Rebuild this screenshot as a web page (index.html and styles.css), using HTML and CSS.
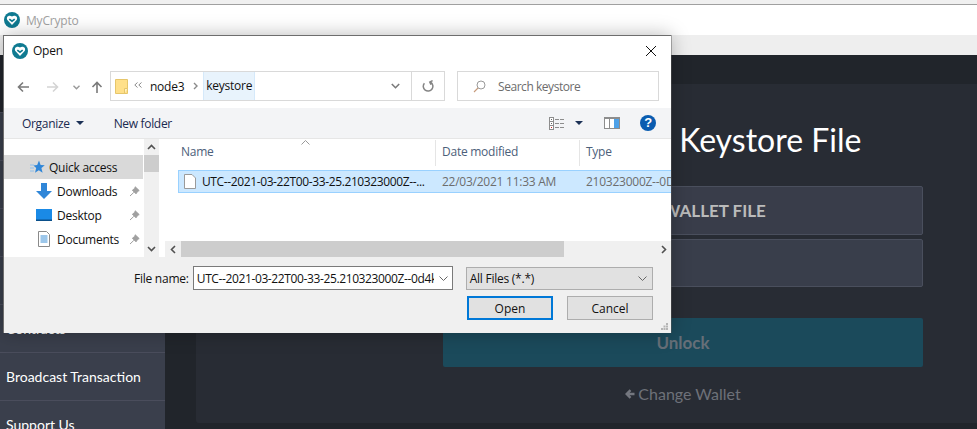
FILE: index.html
```html
<!DOCTYPE html>
<html lang="en">
<head>
<meta charset="utf-8">
<title>MyCrypto</title>
<link rel="stylesheet" href="styles.css">
</head>
<body>
<svg class="defs" width="0" height="0" aria-hidden="true">
  <defs>
    <symbol id="logo" viewBox="0 0 16 16">
      <circle cx="8" cy="8" r="8" fill="#0f7a91"/>
      <path d="M8 4.6 C6.8 3.2 3.9 3.3 3.1 5.2 C2.6 6.4 3 7.5 3.6 8.3 L8 13 L12.4 8.3 C13 7.5 13.4 6.4 12.9 5.2 C12.1 3.3 9.2 3.2 8 4.6Z" fill="#fff"/>
      <path d="M5.3 7.1 L8 9.2 L10.7 7.1" fill="none" stroke="#0f7a91" stroke-width="1.7"/>
    </symbol>
    <symbol id="pin" viewBox="0 0 11 11">
      <path d="M6.2 0.8 L10.2 4.6 L8.8 5.2 L7 7.8 L3.4 4.2 L5.8 2.4Z M4.8 6.4 L1 10" fill="#a0a0a0" stroke="#a0a0a0"/>
    </symbol>
  </defs>
</svg>

<div class="app">
  <div class="top-strip"></div>
  <header class="titlebar">
    <svg class="title-logo"><use href="#logo"/></svg>
    <span class="app-name">MyCrypto</span>
  </header>
  <div class="menubar"></div>

  <div class="workspace">
    <nav class="sidebar">
      <a class="nav-item">View &amp; Send</a>
      <a class="nav-item">Swap</a>
      <a class="nav-item">Check Tx Status</a>
      <a class="nav-item">Sign &amp; Verify</a>
      <a class="nav-item">Contracts</a>
      <a class="nav-item">Broadcast Transaction</a>
      <a class="nav-item">Support Us</a>
    </nav>
    <main class="card">
      <div class="keystore">
        <h1 class="heading"><span class="heading-lead">Select Your</span> Keystore File</h1>
        <button class="file-btn">SELECT WALLET FILE</button>
        <div class="password-box"></div>
        <button class="unlock">Unlock</button>
        <a class="change-wallet">
          <svg class="back-arrow" viewBox="0 0 10 10"><path d="M9.500 5 H2.500 M5.500 1.200 L1.700 5 L5.500 8.800" stroke="#74777f" stroke-width="2.400" fill="none"/></svg>
          Change Wallet
        </a>
      </div>
    </main>
  </div>
</div>

<section class="dialog">
  <div class="dlg-title">
    <svg class="dlg-logo"><use href="#logo"/></svg>
    <span class="dlg-name">Open</span>
    <svg class="dlg-close" viewBox="0 0 12 12"><path d="M1 1 L11 11 M11 1 L1 11" stroke="#111" stroke-width="1" fill="none"/></svg>
  </div>

  <div class="nav-row">
    <svg class="nav-ic back" viewBox="0 0 12 12"><path d="M12 6 H1.5 M6 1.5 L1.5 6 L6 10.5" stroke="#7a7a7a" stroke-width="1.6" fill="none"/></svg>
    <svg class="nav-ic forward" viewBox="0 0 12 12"><path d="M0 6 H10.5 M6 1.5 L10.5 6 L6 10.5" stroke="#d4d4d4" stroke-width="1.6" fill="none"/></svg>
    <svg class="nav-chev" viewBox="0 0 7 5"><path d="M0.5 0.8 L3.5 3.8 L6.5 0.8" stroke="#999" stroke-width="1.4" fill="none"/></svg>
    <svg class="nav-ic up" viewBox="0 0 12 12"><path d="M6 12 V1.5 M1.5 6 L6 1.5 L10.5 6" stroke="#7a7a7a" stroke-width="1.6" fill="none"/></svg>
    <div class="address">
      <svg class="folder" viewBox="0 0 13 15"><path d="M0.5 0.5 H12.5 V14.5 H0.5Z" fill="#ffe08a" stroke="#e6c66b"/><path d="M9.5 14.5 V9.5 H12.5" fill="#fff1c4" stroke="#e6c66b"/></svg>
      <svg class="crumb-more" viewBox="0 0 8 6"><path d="M3.500 0.500 L0.800 3 L3.500 5.500 M7.500 0.500 L4.800 3 L7.500 5.500" stroke="#8a8a8a" fill="none"/></svg>
      <span class="crumb">node3</span>
      <svg class="crumb-sep" viewBox="0 0 5 8"><path d="M1 1 L4 4 L1 7" stroke="#8a8a8a" stroke-width="1.4" fill="none"/></svg>
      <span class="crumb current">keystore</span>
      <svg class="addr-chev" viewBox="0 0 9 6"><path d="M0.8 1 L4.5 4.7 L8.2 1" stroke="#7a7a7a" stroke-width="1.6" fill="none"/></svg>
      <div class="refresh">
        <svg class="refresh-ic" viewBox="0 0 12 12"><path d="M9.6 3.2 A4.8 4.8 0 1 1 3.4 2.2 M1.4 0.6 L4.2 2 L3 4.6" transform="matrix(-1 0 0 1 12 0)" stroke="#858585" stroke-width="1.5" fill="none"/></svg>
      </div>
    </div>
    <div class="search">
      <svg class="search-ic" viewBox="0 0 13 13"><circle cx="8" cy="5" r="4" fill="none" stroke="#9a9a9a"/><path d="M5 8 L1 12" stroke="#c79a7a" stroke-width="1.1"/></svg>
      <span class="search-text">Search keystore</span>
    </div>
  </div>

  <div class="toolbar">
    <span class="tool">Organize</span>
    <span class="caret"></span>
    <span class="tool new-folder">New folder</span>
    <svg class="view-ic" viewBox="0 0 17 13"><rect x="0.5" y="0.5" width="4" height="12" fill="#fff" stroke="#8d8d8d"/><path d="M0.5 4.5 H4.5 M0.5 8.5 H4.5" stroke="#8d8d8d"/><rect x="2" y="2" width="1" height="1" fill="#666"/><rect x="2" y="6" width="1" height="1" fill="#666"/><rect x="2" y="10" width="1" height="1" fill="#c22"/><path d="M6 2.5 H16 M6 6.5 H16 M6 10.5 H16" stroke="#8d8d8d" stroke-dasharray="4 1"/></svg>
    <span class="caret view-caret"></span>
    <svg class="pane-ic" viewBox="0 0 16 12"><rect x="0.5" y="0.5" width="15" height="11" fill="#fff" stroke="#8d8d8d"/><rect x="1" y="0" width="14" height="2" fill="#8d8d8d"/><rect x="5" y="1" width="1" height="10" fill="#8d8d8d"/><rect x="10" y="2" width="5" height="9" fill="#4ea1e8"/></svg>
    <span class="help">?</span>
  </div>

  <div class="browser">
    <aside class="tree">
      <div class="tree-list">
        <div class="tree-row quick">
          <svg class="tree-ic star" viewBox="0 0 15 14"><path d="M9 0.5 L10.6 5 L14.8 5.2 L11.4 8 L12.6 12.8 L8.8 10.2 L5 12.8 L6.2 8 L3.4 5.5 L7.2 5Z" fill="#2f86d8"/><path d="M0 5 H4 M0 8 H4 M0 11 H4" stroke="#8fc0ec"/></svg>
          <span>Quick access</span>
        </div>
        <div class="tree-row sub">
          <svg class="tree-ic" viewBox="0 0 16 16"><path d="M5 0 H11 V8 H16 L8 16 L0 8 H5Z" fill="#2f86d8"/></svg>
          <span class="tree-label">Downloads</span>
          <svg class="pin"><use href="#pin"/></svg>
        </div>
        <div class="tree-row sub">
          <svg class="tree-ic" viewBox="0 0 16 12"><rect width="16" height="11" fill="#1a8ae6"/><rect y="10.5" width="16" height="1.5" fill="#0a4f8a"/></svg>
          <span class="tree-label">Desktop</span>
          <svg class="pin"><use href="#pin"/></svg>
        </div>
        <div class="tree-row sub">
          <svg class="tree-ic doc" viewBox="0 0 12 16"><path d="M0.5 0.5 H8.5 L11.5 3.5 V15.5 H0.5Z" fill="#fff" stroke="#8a8a8a"/><path d="M2.5 5 H9.5 M2.5 7 H9.5 M2.5 9 H9.5 M2.5 11 H9.5" stroke="#3a8fd6"/></svg>
          <span class="tree-label">Documents</span>
          <svg class="pin"><use href="#pin"/></svg>
        </div>
      </div>
      <div class="vscroll">
        <svg class="arrow" viewBox="0 0 9 6"><path d="M1 5 L4.5 1.5 L8 5" stroke="#505050" stroke-width="1.6" fill="none"/></svg>
        <div class="vthumb"></div>
        <svg class="arrow down" viewBox="0 0 9 6"><path d="M1 1 L4.5 4.5 L8 1" stroke="#505050" stroke-width="1.6" fill="none"/></svg>
      </div>
    </aside>

    <div class="files">
      <div class="columns">
        <div class="col col-name">Name<svg class="sort" viewBox="0 0 9 5"><path d="M0.5 4.5 L4.5 0.5 L8.5 4.5" stroke="#999" fill="none"/></svg></div>
        <div class="col col-date">Date modified</div>
        <div class="col col-type">Type</div>
      </div>
      <div class="file-row">
        <div class="cell cell-name">
          <svg class="file-ic" viewBox="0 0 12 15"><path d="M0.5 0.5 H8 L11.5 4 V14.5 H0.5Z" fill="#fff" stroke="#9a9a9a"/></svg>
          <span class="long-name">UTC--2021-03-22T00-33-25.210323000Z--...</span>
        </div>
        <div class="cell cell-date">22/03/2021 11:33 AM</div>
        <div class="cell cell-type">210323000Z--0D</div>
      </div>
      <div class="hscroll">
        <svg class="harrow" viewBox="0 0 6 9"><path d="M5 1 L1.5 4.5 L5 8" stroke="#505050" stroke-width="1.6" fill="none"/></svg>
        <div class="hthumb"></div>
        <svg class="harrow right" viewBox="0 0 6 9"><path d="M1 1 L4.5 4.5 L1 8" stroke="#505050" stroke-width="1.6" fill="none"/></svg>
      </div>
    </div>
  </div>

  <footer class="dlg-foot">
    <div class="foot-row">
      <label class="file-label">File name:</label>
      <div class="name-box">
        <span class="name-value long-name">UTC--2021-03-22T00-33-25.210323000Z--0d4k</span>
        <svg class="combo-chev" viewBox="0 0 9 5"><path d="M0.5 0.5 L4.5 4.5 L8.5 0.5" stroke="#666" fill="none"/></svg>
      </div>
      <div class="type-box">
        <span>All Files (*.*)</span>
        <svg class="combo-chev" viewBox="0 0 9 5"><path d="M0.5 0.5 L4.5 4.5 L8.5 0.5" stroke="#666" fill="none"/></svg>
      </div>
    </div>
    <div class="foot-actions">
      <button class="dlg-btn primary">Open</button>
      <button class="dlg-btn">Cancel</button>
    </div>
    <svg class="grip" viewBox="0 0 7 7"><path d="M5 0h2v2H5z M2.500 2.500h2v2h-2z M5 2.500h2v2H5z M0 5h2v2H0z M2.500 5h2v2h-2z M5 5h2v2H5z" fill="#b5b5b5"/></svg>
  </footer>
</section>
</body>
</html>
```
FILE: styles.css
```css
* { box-sizing: border-box; }
html, body { margin: 0; height: 100%; }
body { width: 977px; height: 429px; overflow: hidden; background: #21252b; font-family: "Lato", sans-serif; position: relative; }
.defs { position: absolute; }
svg { display: block; flex: none; }

.app { display: flex; flex-direction: column; height: 429px; }
.top-strip { height: 5px; background: #f0f0f0; border-bottom: 1px solid #a0a0a0; }
.titlebar { height: 30px; background: #fff; display: flex; align-items: center; padding-left: 4px; }
.title-logo { width: 16px; height: 16px; }
.app-name { margin-left: 6px; font: 12px "Open Sans", sans-serif; letter-spacing: -.2px; color: #a2a2a2; }
.menubar { height: 20px; background: #eee; }

.workspace { flex: 1; display: flex; min-height: 0; background: #21252b; }
.sidebar { width: 165px; margin-top: 57px; background: #3a3f4c; border-top: 1px solid #4a4d5c; flex: none; }
.nav-item { display: flex; align-items: center; height: 48px; padding-left: 6px; border-bottom: 1px solid #4a4d5c; color: #fff; font-size: 14px; }

.card { flex: 1; margin: 29px 0 6px 31px; background: #282c34; border-radius: 3px 0 0 3px; padding-left: 247px; }
.keystore { width: 480px; display: flex; flex-direction: column; align-items: center; }
.heading { margin: 37px 0 0 4px; height: 65px; font-size: 32px; font-weight: 400; line-height: 38px; color: #fff; white-space: nowrap; }
.heading-lead { margin-right: 6px; }
.file-btn { width: 100%; height: 49px; background: #393d4a; border: 1px solid #4a4f5d; border-radius: 2px; color: #bbb; font: 700 17px "Lato", sans-serif; }
.password-box { width: 100%; height: 48px; margin-top: 4px; background: #393e4b; border: 1px solid #4a4f5d; border-radius: 2px; }
.unlock { width: 100%; height: 49px; margin-top: 31px; background: #1b4a5b; border: 0; border-radius: 2px; color: #666f78; font: 700 17px "Lato", sans-serif; }
.change-wallet { margin-top: 17px; font-size: 16px; line-height: 20px; color: #6e7179; display: flex; align-items: center; gap: 3px; }
.back-arrow { width: 10px; height: 10px; }

.dialog { position: absolute; left: 3px; top: 35px; width: 668px; height: 298px; background: #fff; border: 1px solid #6d6d6d; border-width: 1px 0 0 1px; box-shadow: 1px 0 0 rgba(90,90,90,.45), 0 0 18px rgba(0,0,0,.28); display: flex; flex-direction: column; font: 12px "Open Sans", sans-serif; letter-spacing: -.25px; color: #111; }
.long-name { letter-spacing: -.38px; }
.dlg-title { height: 31px; display: flex; align-items: center; padding: 0 14px 2px 8px; flex: none; }
.dlg-logo { width: 16px; height: 16px; }
.dlg-name { margin-left: 5px; font-size: 12px; }
.dlg-close { width: 12px; height: 12px; margin-left: auto; }

.nav-row { height: 41px; display: flex; align-items: flex-start; padding: 4px 0 0 13px; flex: none; }
.nav-ic { width: 12px; height: 12px; margin-top: 10px; }
.forward { margin-left: 18px; }
.nav-chev { width: 7px; height: 5px; margin: 14px 0 0 14px; }
.up { margin-left: 11px; }
.address { width: 335px; height: 30px; margin-left: 7px; border: 1px solid #d9d9d9; display: flex; align-items: center; padding-left: 4px; }
.folder { width: 13px; height: 15px; }
.crumb-more { width: 8px; height: 6px; margin: -3px 0 0 6px; }
.crumb { font-size: 12px; margin-left: 8px; }
.crumb.current { height: 28px; line-height: 28px; background: #e8f3fc; border: 1px solid #d5e9fa; border-width: 0 1px; margin-left: 5px; padding: 0 2px; }
.crumb-sep { width: 5px; height: 8px; margin-left: 9px; }
.addr-chev { width: 9px; height: 6px; margin-left: auto; margin-right: 11px; }
.refresh { width: 33px; height: 28px; border-left: 1px solid #d9d9d9; display: flex; align-items: center; justify-content: center; }
.refresh-ic { width: 12px; height: 12px; }
.search { width: 202px; height: 30px; margin-left: 12px; border: 1px solid #d9d9d9; display: flex; align-items: center; padding-left: 15px; }
.search-ic { width: 13px; height: 13px; }
.search-text { margin-left: 12px; color: #6d6d6d; font-size: 12px; letter-spacing: -.45px; }

.toolbar { height: 31px; background: #f3f4f6; border-bottom: 1px solid #e6e6e6; display: flex; align-items: center; padding: 0 15px 0 18px; color: #1a2a50; flex: none; }
.tool { font-size: 12px; letter-spacing: -.32px; }
.caret { width: 0; height: 0; border: 4px solid transparent; border-top: 4px solid #1c3156; border-bottom: 0; margin-left: 6px; }
.new-folder { margin-left: 30px; }
.view-ic { width: 17px; height: 13px; margin-left: auto; }
.view-caret { margin-left: 9px; }
.pane-ic { width: 16px; height: 12px; margin-left: 21px; }
.help { width: 16px; height: 16px; margin-left: 20px; border-radius: 50%; background: #0a5cb0; color: #fff; font: 700 13px/16px "Liberation Sans", sans-serif; text-align: center; }

.browser { flex: 1; display: flex; min-height: 0; background: #fff; }
.tree { width: 158px; display: flex; flex: none; }
.tree-list { width: 139px; padding-top: 16px; }
.tree-row { height: 24px; display: flex; align-items: center; }
.quick { background: #d9d9d9; padding-left: 26px; }
.quick span { margin-left: 4px; }
.sub { padding-left: 32px; }
.tree-ic { width: 16px; height: 16px; }
.star { width: 15px; height: 14px; }
.doc { width: 12px; margin: 0 2px; }
.tree-label { margin-left: 5px; }
.pin { width: 11px; height: 11px; margin-left: auto; margin-right: 3px; }
.vscroll { width: 15px; margin-left: 1px; background: #f0f0f0; display: flex; flex-direction: column; align-items: center; }
.arrow { width: 9px; height: 6px; margin-top: 5px; }
.vthumb { width: 15px; height: 17px; background: #cdcdcd; margin-top: 5px; }
.arrow.down { margin-top: auto; margin-bottom: 5px; }

.files { flex: 1; display: flex; flex-direction: column; min-width: 0; overflow: hidden; }
.columns { height: 31px; display: flex; color: #4c607a; flex: none; }
.col { padding: 3px 0 0 6px; height: 26px; margin-top: 1px; border-right: 1px solid #e5e5e5; }
.col-name { width: 274px; padding-left: 19px; position: relative; }
.sort { position: absolute; left: 139px; top: 0; width: 9px; height: 5px; }
.col-date { width: 144px; }
.col-type { border: 0; }
.file-row { height: 23px; margin-left: 16px; display: flex; align-items: center; background: #cce8ff; border: 1px solid #99d1ff; border-right: 0; flex: none; white-space: nowrap; }
.cell-name { width: 263px; display: flex; align-items: center; padding-left: 5px; }
.file-ic { width: 12px; height: 15px; margin-right: 6px; }
.cell-date { width: 144px; color: #6d6d6d; }
.cell-type { color: #6d6d6d; overflow: hidden; width: 85px; }
.hscroll { height: 16px; margin-top: auto; margin-left: 3px; background: #f0f0f0; display: flex; align-items: center; }
.harrow { width: 6px; height: 9px; margin: 0 5px; }
.hthumb { width: 383px; height: 16px; background: #cdcdcd; }
.harrow.right { margin-left: auto; margin-right: 4px; }

.dlg-foot { height: 76px; background: #f0f0f0; flex: none; padding: 9px 18px 0 0; position: relative; }
.foot-row { display: flex; align-items: center; height: 24px; }
.file-label { margin-left: 130px; width: 59px; }
.name-box { width: 261px; height: 24px; background: #fff; border: 1px solid #7a7a7a; display: flex; align-items: center; padding: 0 4px 0 3px; }
.name-value { width: 237px; overflow: hidden; white-space: nowrap; }
.combo-chev { width: 9px; height: 5px; margin-left: auto; }
.type-box { width: 188px; height: 23px; margin-left: 13px; background: #e1e1e1; border: 1px solid #adadad; display: flex; align-items: center; padding: 0 5px 0 3px; }
.foot-actions { display: flex; justify-content: flex-end; gap: 14px; margin-top: 6px; }
.dlg-btn { width: 86px; height: 24px; background: #e1e1e1; border: 1px solid #adadad; font: 12px "Open Sans", sans-serif; color: #111; padding: 0; }
.dlg-btn.primary { border: 2px solid #0078d7; }
.grip { position: absolute; right: 3px; bottom: 3px; width: 7px; height: 7px; }
```
